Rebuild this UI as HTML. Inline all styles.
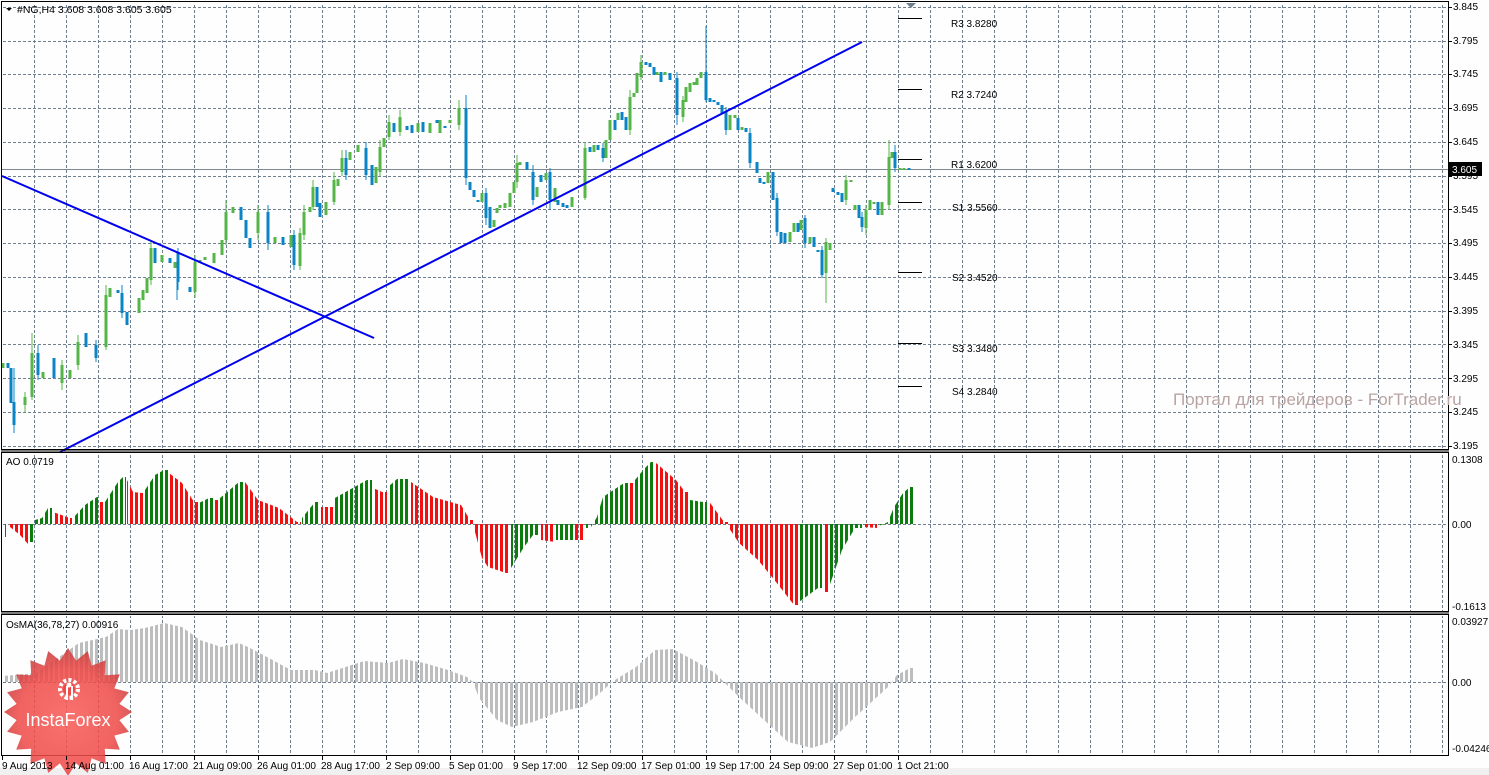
<!DOCTYPE html>
<html><head><meta charset="utf-8"><style>
html,body{margin:0;padding:0;background:#fff;}
svg{display:block;font-family:"Liberation Sans",sans-serif;}
</style></head><body>
<svg width="1489" height="775" viewBox="0 0 1489 775" xmlns="http://www.w3.org/2000/svg">
<defs>
<pattern id="vg" x="2" y="0" width="32" height="5" patternUnits="userSpaceOnUse"><rect x="0" y="0" width="1" height="3" fill="#6f7f8f"/></pattern>
<pattern id="pg" x="0" y="0" width="5" height="10" patternUnits="userSpaceOnUse"><rect x="0" y="0" width="3" height="10" fill="#0c7d0c"/></pattern>
<pattern id="pr" x="0" y="0" width="5" height="10" patternUnits="userSpaceOnUse"><rect x="0" y="0" width="3" height="10" fill="#f21010"/></pattern>
<pattern id="pk" x="0" y="0" width="5" height="10" patternUnits="userSpaceOnUse"><rect x="0" y="0" width="3" height="10" fill="#bdbdbd"/></pattern>
<radialGradient id="rg" cx="0.5" cy="0.55" r="0.55"><stop offset="0" stop-color="#f85a55"/><stop offset="0.7" stop-color="#ee4a48"/><stop offset="1" stop-color="#c83a3a"/></radialGradient>
</defs>
<rect width="1489" height="775" fill="#fdfefd"/>
<rect x="0" y="768" width="1489" height="7" fill="#f0f0f0"/>

<rect x="30" y="3" width="1416" height="446" fill="url(#vg)"/>
<rect x="30" y="455" width="1416" height="156" fill="url(#vg)"/>
<rect x="30" y="616" width="1416" height="139" fill="url(#vg)"/>

<g stroke="#6f7f8f" stroke-width="1" stroke-dasharray="3 2">
<line x1="3" y1="7.5" x2="1447" y2="7.5"/>
<line x1="3" y1="41.5" x2="1447" y2="41.5"/>
<line x1="3" y1="74.5" x2="1447" y2="74.5"/>
<line x1="3" y1="108.5" x2="1447" y2="108.5"/>
<line x1="3" y1="142.5" x2="1447" y2="142.5"/>
<line x1="3" y1="176.5" x2="1447" y2="176.5"/>
<line x1="3" y1="209.5" x2="1447" y2="209.5"/>
<line x1="3" y1="243.5" x2="1447" y2="243.5"/>
<line x1="3" y1="277.5" x2="1447" y2="277.5"/>
<line x1="3" y1="311.5" x2="1447" y2="311.5"/>
<line x1="3" y1="344.5" x2="1447" y2="344.5"/>
<line x1="3" y1="378.5" x2="1447" y2="378.5"/>
<line x1="3" y1="412.5" x2="1447" y2="412.5"/>
<line x1="3" y1="446.5" x2="1447" y2="446.5"/>
<line x1="3" y1="524.5" x2="1447" y2="524.5"/>
<line x1="3" y1="682.5" x2="1447" y2="682.5"/>
</g>

<line x1="2" y1="169.5" x2="1448" y2="169.5" stroke="#7f8790" stroke-width="1"/>

<g stroke="#000" stroke-width="1">
<line x1="898" y1="18.5" x2="922" y2="18.5"/>
<line x1="898" y1="89.5" x2="922" y2="89.5"/>
<line x1="898" y1="159.5" x2="922" y2="159.5"/>
<line x1="898" y1="202.5" x2="922" y2="202.5"/>
<line x1="898" y1="272.5" x2="922" y2="272.5"/>
<line x1="898" y1="343.5" x2="922" y2="343.5"/>
<line x1="898" y1="386.5" x2="922" y2="386.5"/>
</g>
<g font-size="10" fill="#000">
<text x="951" y="27">R3 3.8280</text>
<text x="951" y="98">R2 3.7240</text>
<text x="951" y="168">R1 3.6200</text>
<text x="952" y="211">S1 3.5560</text>
<text x="952" y="281">S2 3.4520</text>
<text x="952" y="352">S3 3.3480</text>
<text x="952" y="395">S4 3.2840</text>
</g>
<polygon points="906,3 916,3 911,8" fill="#6f7f8f"/>

<path stroke="#55b548" stroke-width="1" fill="none" d="M32 333V400M25 392V412M62 360V390M78 335V370M106 285V350M151 240V285M195 255V298M226 200V245M258 205V240M300 228V270M313 180V210M334 172V205M342 150V176M380 140V176M389 115V140M459 100V130M517 155V188M585 142V200M630 90V135M641 55V80M683 96V122M826 238V303M846 175V205M889 140V210M866 205V235M304 205V240M400 110V136"/>
<path stroke="#0b84c6" stroke-width="1" fill="none" d="M14 368V433M38 345V380M96 340V362M122 285V318M177 252V300M178 248V290M268 205V250M294 230V270M346 150V180M366 142V180M466 95V185M486 188V225M533 165V205M550 168V210M677 72V125M706 26V102M750 128V168M777 193V236M805 215V248M822 246V278M895 145V172M862 212V232M603 143V162M726 107V135"/>
<path stroke="#55b548" stroke-width="3" fill="none" d="M3 363V368M25 397V405M32 353V397M43 372V378M62 365V383M70 370V378M78 342V365M106 295V347M110 288V297M139 298V313M143 290V300M147 278V293M151 248V280M162 255V262M175 262V268M195 262V292M200 260V263M205 257V260M214 253V263M222 240V255M226 212V240M233 207V213M258 212V233M275 237V243M291 235V247M300 233V266M304 212V235M310 207V212M313 187V207M326 202V215M334 180V202M338 179V186M342 158V172M350 152V160M358 145V152M376 167V183M380 147V172M384 138V147M389 122V137M400 117V132M418 123V132M430 123V133M440 120V133M450 120V123M459 108V125M482 193V202M494 220V227M497 208V213M500 205V208M505 203V208M510 193V207M514 182V193M517 163V182M520 162V165M537 187V197M546 173V180M555 188V202M572 197V207M585 148V198M594 145V152M606 140V158M610 120V140M618 113V120M630 97V130M634 93V97M637 73V93M641 62V77M657 72V75M665 72V75M683 100V117M686 87V102M690 83V92M694 82V85M697 78V85M701 72V78M730 115V130M735 115V118M742 127V130M768 172V183M790 232V242M794 223V232M801 220V230M810 237V243M826 242V273M830 243V250M846 180V200M851 180V182M855 205V210M866 210V228M870 200V210M874 202V204M882 202V215M889 157V205M892 152V158M900 168V170M904 168V170"/>
<path stroke="#0b84c6" stroke-width="3" fill="none" d="M8 363V368M11 368V403M14 402V425M38 353V375M54 358V378M86 333V347M96 345V358M118 290V293M122 293V313M127 312V325M155 248V263M170 258V263M178 253V282M190 287V292M241 207V220M246 220V238M250 238V248M268 212V243M283 237V245M294 235V265M317 187V207M320 203V217M346 158V175M366 148V175M372 165V185M394 123V132M407 126V130M412 125V133M423 122V132M437 120V123M445 126V128M466 108V178M470 182V190M474 190V197M478 200V202M486 193V218M490 207V228M527 162V170M533 172V200M541 175V182M550 172V200M558 200V205M563 203V207M567 205V208M590 147V152M598 145V150M603 148V158M615 120V130M622 112V120M626 117V130M646 62V65M650 63V67M654 67V75M661 72V82M670 73V80M677 78V115M706 72V100M710 98V102M714 100V102M718 102V105M722 105V113M726 112V130M738 118V130M746 128V132M750 133V163M757 162V173M760 178V183M764 182V184M773 172V200M777 198V232M781 232V243M785 233V243M798 223V232M805 218V243M814 237V247M818 250V252M822 250V275M833 188V192M838 192V195M842 193V202M859 205V218M862 217V227M878 202V215M895 152V168M909 168V170"/>

<g stroke="#0000f0" stroke-width="2" fill="none">
<line x1="2" y1="176" x2="374" y2="338"/>
<line x1="60" y1="452" x2="862" y2="42"/>
</g>

<polygon points="6,8 12,8 9,11" fill="#000"/>
<text x="17" y="13" font-size="10.5" fill="#000">#NG,H4  3.608 3.608 3.605 3.605</text>

<g fill="url(#pg)">
<polygon points="3,524 3,537 6,537 6,524"/>
<polygon points="30,524 30,542 33,542 33,524"/>
<polygon points="35,524 35,520 42,518 48,508 52,508 52,524"/>
<polygon points="73,524 73,518 85,505 97,497 99,497 99,524"/>
<polygon points="105,524 105,502 118,482 123,477 126,477 126,524"/>
<polygon points="145,524 145,490 155,475 164,470 168,470 168,524"/>
<polygon points="199,524 199,503 209,498 214,498 214,524"/>
<polygon points="220,524 220,498 239,482 244,482 244,524"/>
<polygon points="302,524 302,518 315,502 320,502 320,524"/>
<polygon points="335,524 335,498 358,485 367,480 372,480 372,524"/>
<polygon points="388,524 388,487 397,479 410,479 410,524"/>
<polygon points="511,524 511,568 524,547 533,535 540,535 540,524"/>
<polygon points="556,524 556,540 574,540 574,524"/>
<polygon points="586,524 586,528 590,528 590,524"/>
<polygon points="591,524 591,527 597,517 603,497 624,483 629,483 629,524"/>
<polygon points="635,524 635,480 645,468 651,462 655,462 655,524"/>
<polygon points="690,524 690,500 703,502 707,502 707,524"/>
<polygon points="799,524 799,602 818,588 822,588 822,524"/>
<polygon points="829,524 829,587 842,550 855,528 862,528 862,524"/>
<polygon points="878,524 878,526 884,524 888,522 894,507 903,493 910,487 913,487 913,524"/>
</g>
<g fill="url(#pr)">
<polygon points="10,524 10,527 20,535 28,544 30,544 30,524"/>
<polygon points="53,524 53,512 70,518 72,518 72,524"/>
<polygon points="100,524 100,502 104,502 104,524"/>
<polygon points="127,524 127,480 133,492 142,493 144,493 144,524"/>
<polygon points="169,524 169,473 182,483 194,502 198,502 198,524"/>
<polygon points="215,524 215,500 219,500 219,524"/>
<polygon points="245,524 245,482 258,500 279,508 297,522 301,522 301,524"/>
<polygon points="321,524 321,507 334,507 334,524"/>
<polygon points="373,524 373,488 382,492 387,492 387,524"/>
<polygon points="411,524 411,482 433,497 461,505 470,520 474,520 474,524"/>
<polygon points="475,524 475,532 482,558 488,567 506,573 510,573 510,524"/>
<polygon points="541,524 541,540 555,542 555,524"/>
<polygon points="575,524 575,540 585,540 585,524"/>
<polygon points="630,524 630,483 634,483 634,524"/>
<polygon points="656,524 656,463 676,480 685,492 689,492 689,524"/>
<polygon points="708,524 708,500 724,522 728,522 728,524"/>
<polygon points="729,524 729,528 739,543 758,560 776,582 794,605 798,605 798,524"/>
<polygon points="823,524 823,592 828,592 828,524"/>
<polygon points="863,524 863,527 877,528 877,524"/>
</g>
<text x="6" y="465" font-size="10" fill="#000">AO 0.0719</text>

<polygon fill="url(#pk)" points="3,682 3,676 36,673 79,643 106,637 118,629 130,630 145,628 164,623 182,627 200,640 221,647 239,643 248,647 267,657 291,670 315,670 327,673 364,661 388,663 403,659 424,663 448,670 467,677 473,682 479,698 497,720 512,727 533,722 558,712 582,707 600,693 609,685 612,682 618,678 636,667 655,650 673,649 697,662 715,673 724,682 739,697 764,720 788,742 812,748 830,742 855,717 888,687 892,682 897,675 910,668 913,668 913,682"/>
<text x="6" y="628" font-size="10" fill="#000">OsMA(36,78,27) 0.00916</text>

<g fill="none" stroke="#000" stroke-width="1">
<rect x="1.5" y="1.5" width="1447" height="448"/>
<rect x="1.5" y="452.5" width="1447" height="159"/>
<rect x="1.5" y="614.5" width="1447" height="141"/>
</g>
<line x1="1" y1="451" x2="1449" y2="451" stroke="#000"/>
<line x1="1" y1="613" x2="1449" y2="613" stroke="#000"/>

<!-- InstaForex badge (under labels) -->
<g transform="translate(2,7)" opacity="0.86">
<polygon fill="url(#rg)" points="130,705 117.4,713.1 126.9,724.8 112.3,728.6 117.8,742.6 102.8,741.8 103.6,756.8 89.6,751.3 85.8,765.9 74.1,756.4 66,769 57.9,756.4 46.2,765.9 42.4,751.3 28.4,756.8 29.2,741.8 14.2,742.6 19.7,728.6 5.1,724.8 14.6,713.1 2,705 14.6,696.9 5.1,685.2 19.7,681.4 14.2,667.4 29.2,668.2 28.4,653.2 42.4,658.7 46.2,644.1 57.9,653.6 66,641 74.1,653.6 85.8,644.1 89.6,658.7 103.6,653.2 102.8,668.2 117.8,667.4 112.3,681.4 126.9,685.2 117.4,696.9"/>
</g>
<g fill="#fff">
<circle cx="69" cy="689" r="9" fill="none" stroke="#fff" stroke-width="4" stroke-dasharray="3 2.2"/>
<circle cx="69" cy="689" r="6" fill="#ee4a48"/>
<rect x="66" y="686" width="2" height="14"/><rect x="71" y="686" width="2" height="14"/>
<circle cx="69" cy="685" r="2.5"/>
</g>
<text x="68" y="726" font-size="18" fill="#fff" text-anchor="middle">InstaForex</text>

<g font-size="10" fill="#000">
<text x="1453" y="10">3.845</text>
<text x="1453" y="44">3.795</text>
<text x="1453" y="77">3.745</text>
<text x="1453" y="111">3.695</text>
<text x="1453" y="145">3.645</text>
<text x="1453" y="179">3.595</text>
<text x="1453" y="213">3.545</text>
<text x="1453" y="246">3.495</text>
<text x="1453" y="280">3.445</text>
<text x="1453" y="314">3.395</text>
<text x="1453" y="348">3.345</text>
<text x="1453" y="382">3.295</text>
<text x="1453" y="415">3.245</text>
<text x="1453" y="449">3.195</text>
<text x="1452" y="463">0.1308</text>
<text x="1452" y="528">0.00</text>
<text x="1452" y="610">-0.1613</text>
<text x="1452" y="625">0.03927</text>
<text x="1452" y="686">0.00</text>
<text x="1452" y="752">-0.04246</text>
</g>
<g stroke="#000">
<line x1="1449" y1="7.5" x2="1452" y2="7.5"/><line x1="1449" y1="41.5" x2="1452" y2="41.5"/><line x1="1449" y1="74.5" x2="1452" y2="74.5"/><line x1="1449" y1="108.5" x2="1452" y2="108.5"/><line x1="1449" y1="142.5" x2="1452" y2="142.5"/><line x1="1449" y1="176.5" x2="1452" y2="176.5"/><line x1="1449" y1="209.5" x2="1452" y2="209.5"/><line x1="1449" y1="243.5" x2="1452" y2="243.5"/><line x1="1449" y1="277.5" x2="1452" y2="277.5"/><line x1="1449" y1="311.5" x2="1452" y2="311.5"/><line x1="1449" y1="344.5" x2="1452" y2="344.5"/><line x1="1449" y1="378.5" x2="1452" y2="378.5"/><line x1="1449" y1="412.5" x2="1452" y2="412.5"/><line x1="1449" y1="446.5" x2="1452" y2="446.5"/>
</g>
<rect x="1449" y="162" width="33" height="14" fill="#000"/>
<text x="1452" y="173" font-size="10" fill="#fff">3.605</text>

<text x="1173" y="405" font-size="17" fill="#b9a3a3">Портал для трейдеров - ForTrader.ru</text>

<g stroke="#000">
<line x1="2.5" y1="756" x2="2.5" y2="760"/><line x1="66.5" y1="756" x2="66.5" y2="760"/><line x1="130.5" y1="756" x2="130.5" y2="760"/><line x1="194.5" y1="756" x2="194.5" y2="760"/><line x1="258.5" y1="756" x2="258.5" y2="760"/><line x1="322.5" y1="756" x2="322.5" y2="760"/><line x1="386.5" y1="756" x2="386.5" y2="760"/><line x1="450.5" y1="756" x2="450.5" y2="760"/><line x1="514.5" y1="756" x2="514.5" y2="760"/><line x1="578.5" y1="756" x2="578.5" y2="760"/><line x1="642.5" y1="756" x2="642.5" y2="760"/><line x1="706.5" y1="756" x2="706.5" y2="760"/><line x1="770.5" y1="756" x2="770.5" y2="760"/><line x1="834.5" y1="756" x2="834.5" y2="760"/><line x1="898.5" y1="756" x2="898.5" y2="760"/>
</g>
<g font-size="10" fill="#000">
<text x="2" y="769">9 Aug 2013</text>
<text x="65" y="769">14 Aug 01:00</text>
<text x="129" y="769">16 Aug 17:00</text>
<text x="193" y="769">21 Aug 09:00</text>
<text x="257" y="769">26 Aug 01:00</text>
<text x="321" y="769">28 Aug 17:00</text>
<text x="386" y="769">2 Sep 09:00</text>
<text x="449" y="769">5 Sep 01:00</text>
<text x="513" y="769">9 Sep 17:00</text>
<text x="577" y="769">12 Sep 09:00</text>
<text x="641" y="769">17 Sep 01:00</text>
<text x="705" y="769">19 Sep 17:00</text>
<text x="769" y="769">24 Sep 09:00</text>
<text x="833" y="769">27 Sep 01:00</text>
<text x="897" y="769">1 Oct 21:00</text>
</g>
</svg>
</body></html>
